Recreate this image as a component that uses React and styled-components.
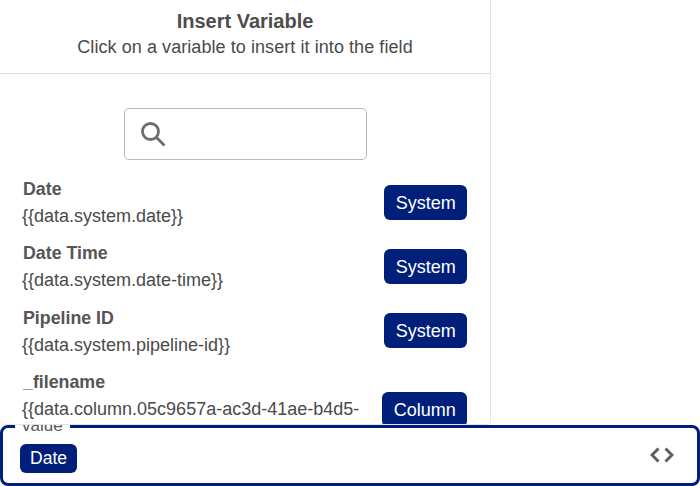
import React from "react";
import styled, { createGlobalStyle } from "styled-components";

const Global = createGlobalStyle`
  html, body { margin: 0; padding: 0; background: #fff; }
  body { font-family: "Liberation Sans", Arial, sans-serif; color: #4a4a4a; overflow: hidden; }
`;
const Page = styled.div`
  width: 700px; height: 486px; display: flex; flex-direction: column; overflow: hidden;
`;
const Panel = styled.section`
  position: relative; z-index: 2; box-sizing: border-box; width: 491px; height: 425px; flex: none;
  background: #fff; border-right: 1px solid #e4e4e4; border-bottom: 1px solid #e4e4e4;
  border-bottom-right-radius: 4px; border-bottom-left-radius: 6px; overflow: hidden;
`;
const Header = styled.header`
  height: 74px; box-sizing: border-box; border-bottom: 1px solid #dcdcdc;
  display: flex; flex-direction: column; align-items: center; padding-top: 10px;
`;
const Title = styled.h2`
  margin: 0; font-size: 20px; line-height: 23px; font-weight: 700; color: #4d4d4d;
`;
const Subtitle = styled.p`
  margin: 4px 0 0; font-size: 18px; line-height: 20px; letter-spacing: .07px; color: #4a4a4a;
`;
const SearchWrap = styled.div`
  display: flex; justify-content: center; padding-top: 34px;
`;
const Search = styled.div`
  box-sizing: border-box; width: 243px; height: 51.5px; border: 1.5px solid #b8b8b8; border-radius: 5px;
  display: flex; align-items: center; padding-left: 15px; color: #6e6e6e;
`;
const List = styled.ul`
  list-style: none; margin: 0; padding: 20.5px 23px 0 23px;
`;
const Row = styled.li`
  display: flex; justify-content: space-between; height: 64.4px;
`;
const Info = styled.div`
  width: 345px;
`;
const Name = styled.div`
  font-size: 17.8px; line-height: 19px; font-weight: 700; color: #555;
`;
const Path = styled.div`
  margin-top: 7px; margin-left: -1px; font-size: 18px; line-height: 21px; color: #4a4a4a;
`;
const Tag = styled.span`
  flex: none; margin-top: ${p => (p.$low ? "18.5px" : "4.5px")};
  box-sizing: border-box; height: 35px; padding: 0 11.25px; border-radius: 6px;
  background: #001f7a; color: #fff; font-size: 18px; line-height: 36px;
`;
const Field = styled.div`
  position: relative; box-sizing: border-box; height: 60.5px; width: 699.5px;
  border: 3px solid #001f7a; border-radius: 8px; display: flex; align-items: center;
  justify-content: space-between; padding: 0 20px 0 17px; background: #fff;
`;
const Legend = styled.span`
  position: absolute; left: 12px; top: -8px; box-sizing: border-box; width: 55px; padding-left: 7px;
  background: #fff; font-size: 17px; line-height: 12px; color: #555;
`;
const Chip = styled.span`
  box-sizing: border-box; height: 29px; width: 57px; margin-top: 6px; text-align: center; border-radius: 6px;
  background: #001f7a; color: #fff; font-size: 17.5px; line-height: 29px;
`;
const CodeIcon = styled.svg`
  width: 24px; height: 16px; margin-top: -1px; margin-right: 3px; color: #5f5f5f;
`;

const rows = [
  ["Date", "{{data.system.date}}", "System"],
  ["Date Time", "{{data.system.date-time}}", "System"],
  ["Pipeline ID", "{{data.system.pipeline-id}}", "System"],
  ["_filename", "{{data.column.05c9657a-ac3d-41ae-b4d5-", "Column"],
];

export default function App() {
  return (
    <Page>
      <Global />
      <Panel>
        <Header>
          <Title>Insert Variable</Title>
          <Subtitle>Click on a variable to insert it into the field</Subtitle>
        </Header>
        <SearchWrap>
          <Search>
            <svg width="26" height="26" viewBox="0 0 26 26" fill="none" stroke="currentColor" strokeWidth="2.8">
              <circle cx="10.5" cy="10.5" r="8" />
              <path d="M16.5 16.5 L24.5 24.5" />
            </svg>
          </Search>
        </SearchWrap>
        <List>
          {rows.map(([name, path, tag], i) => (
            <Row key={name}>
              <Info>
                <Name>{name}</Name>
                <Path>{path}</Path>
              </Info>
              <Tag $low={i === 3}>{tag}</Tag>
            </Row>
          ))}
        </List>
      </Panel>
      <Field>
        <Legend>value</Legend>
        <Chip>Date</Chip>
        <CodeIcon viewBox="0 0 24 16" fill="none" stroke="currentColor" strokeWidth="3">
          <path d="M8.5 1.5 L2 8 L8.5 14.5" />
          <path d="M15.5 1.5 L22 8 L15.5 14.5" />
        </CodeIcon>
      </Field>
    </Page>
  );
}
